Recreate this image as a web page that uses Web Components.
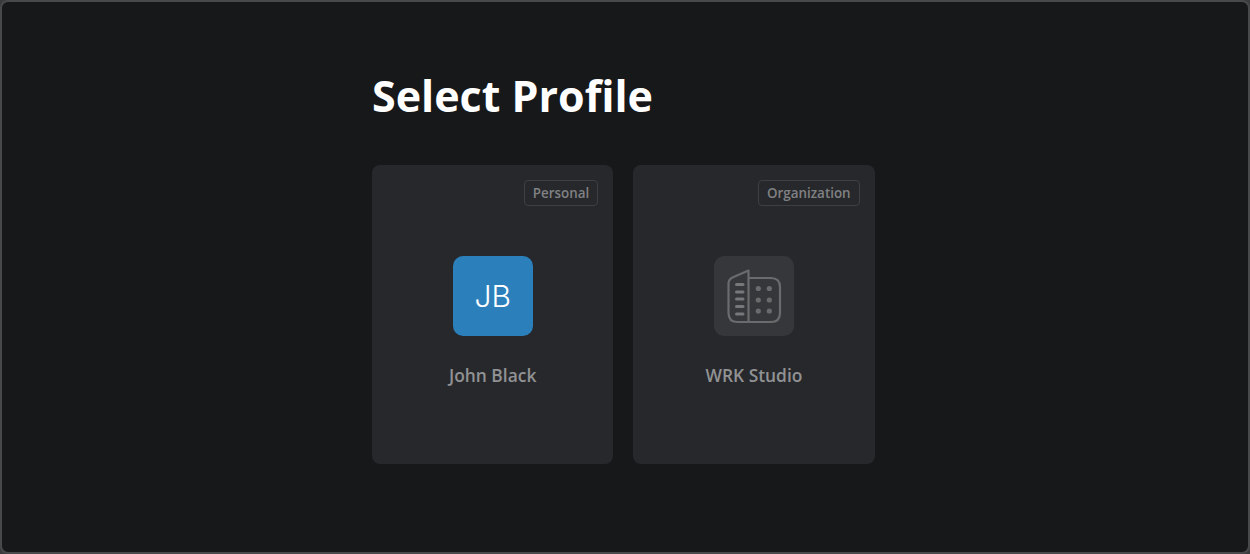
<!DOCTYPE html>
<html>
<head>
<meta charset="utf-8">
<style>
    html, body { margin: 0; padding: 0; background: #3a3b3d; }
</style>
</head>
<body>
<select-profile-page>
    <profile-card name="John Black" tag="Personal">
        <profile-avatar color="#2b80bc">JB</profile-avatar>
    </profile-card>
    <profile-card name="WRK Studio" tag="Organization">
        <profile-avatar color="#36373a">
            <svg width="80" height="80" viewBox="0 0 80 80" fill="none" stroke="#6a6b6d" stroke-width="2.2">
                <path d="M34.5 66V14.5L19 21.2Q14.5 23.2 14.5 27.5V57Q14.5 66 23.5 66Z" stroke-linejoin="round"/>
                <path d="M34.5 22H57Q66 22 66 31V57Q66 66 57 66H34.5"/>
                <g stroke="#77787a" stroke-width="3" stroke-linecap="round">
                    <path d="M22.5 28.5H29"/>
                    <path d="M22.5 36H29"/>
                    <path d="M22.5 43H29"/>
                    <path d="M22.5 50.5H29"/>
                    <path d="M22.5 58H29"/>
                </g>
                <g fill="#6a6b6d" stroke="none">
                    <circle cx="44.3" cy="32.5" r="2.6"/>
                    <circle cx="55.3" cy="32.5" r="2.6"/>
                    <circle cx="44.3" cy="44" r="2.6"/>
                    <circle cx="55.3" cy="44" r="2.6"/>
                    <circle cx="44.3" cy="55" r="2.6"/>
                    <circle cx="55.3" cy="55" r="2.6"/>
                </g>
            </svg>
        </profile-avatar>
    </profile-card>
</select-profile-page>

<script>
const pageTemplate = document.createElement('template');
pageTemplate.innerHTML = `
    <style>
        :host {
            display: block;
            box-sizing: border-box;
            width: 1250px;
            height: 554px;
            padding: 70px 0 0 370px;
            border: 2px solid #48494b;
            border-radius: 8px;
            background: #17181a;
            font-family: "Open Sans", sans-serif;
        }
        h1 {
            margin: 0 0 45px;
            font-size: 43px;
            line-height: 48px;
            font-weight: 700;
            color: #fff;
        }
        .cards {
            display: flex;
            gap: 20px;
        }
    </style>
    <h1>Select Profile</h1>
    <div class="cards"><slot></slot></div>
`;

class SelectProfilePage extends HTMLElement {
    constructor() {
        super();
        this.attachShadow({ mode: 'open' });
        this.shadowRoot.appendChild(pageTemplate.content.cloneNode(true));
    }
}

const cardTemplate = document.createElement('template');
cardTemplate.innerHTML = `
    <style>
        :host {
            display: flex;
            flex-direction: column;
            align-items: center;
            box-sizing: border-box;
            width: 241.3px;
            height: 299px;
            padding: 15px;
            border-radius: 8px;
            background: #27282b;
        }
        .tag {
            align-self: flex-end;
            box-sizing: border-box;
            height: 26px;
            padding: 0 8px;
            border: 1px solid #3e3f42;
            border-radius: 4px;
            font-size: 13.4px;
            line-height: 24px;
            font-weight: 600;
            color: #808183;
        }
        .body {
            display: flex;
            flex-direction: column;
            align-items: center;
            gap: 27px;
            margin-top: 50px;
        }
        .name {
            font-size: 17.4px;
            line-height: 24px;
            font-weight: 600;
            color: #919294;
        }
    </style>
    <div class="tag"></div>
    <div class="body">
        <slot></slot>
        <div class="name"></div>
    </div>
`;

class ProfileCard extends HTMLElement {
    constructor() {
        super();
        this.attachShadow({ mode: 'open' });
        this.shadowRoot.appendChild(cardTemplate.content.cloneNode(true));
        this.shadowRoot.querySelector('.tag').textContent = this.getAttribute('tag');
        this.shadowRoot.querySelector('.name').textContent = this.getAttribute('name');
    }
}

const avatarTemplate = document.createElement('template');
avatarTemplate.innerHTML = `
    <style>
        :host {
            display: flex;
            justify-content: center;
            align-items: center;
            width: 80px;
            height: 80px;
            border-radius: 10px;
            font-family: "Inter", sans-serif;
            font-weight: 300;
            font-size: 30px;
            color: #fff;
        }
        ::slotted(svg) { display: block; }
    </style>
    <slot></slot>
`;

class ProfileAvatar extends HTMLElement {
    constructor() {
        super();
        this.attachShadow({ mode: 'open' });
        this.shadowRoot.appendChild(avatarTemplate.content.cloneNode(true));
        this.style.background = this.getAttribute('color');
    }
}

customElements.define('select-profile-page', SelectProfilePage);
customElements.define('profile-card', ProfileCard);
customElements.define('profile-avatar', ProfileAvatar);
</script>
</body>
</html>
